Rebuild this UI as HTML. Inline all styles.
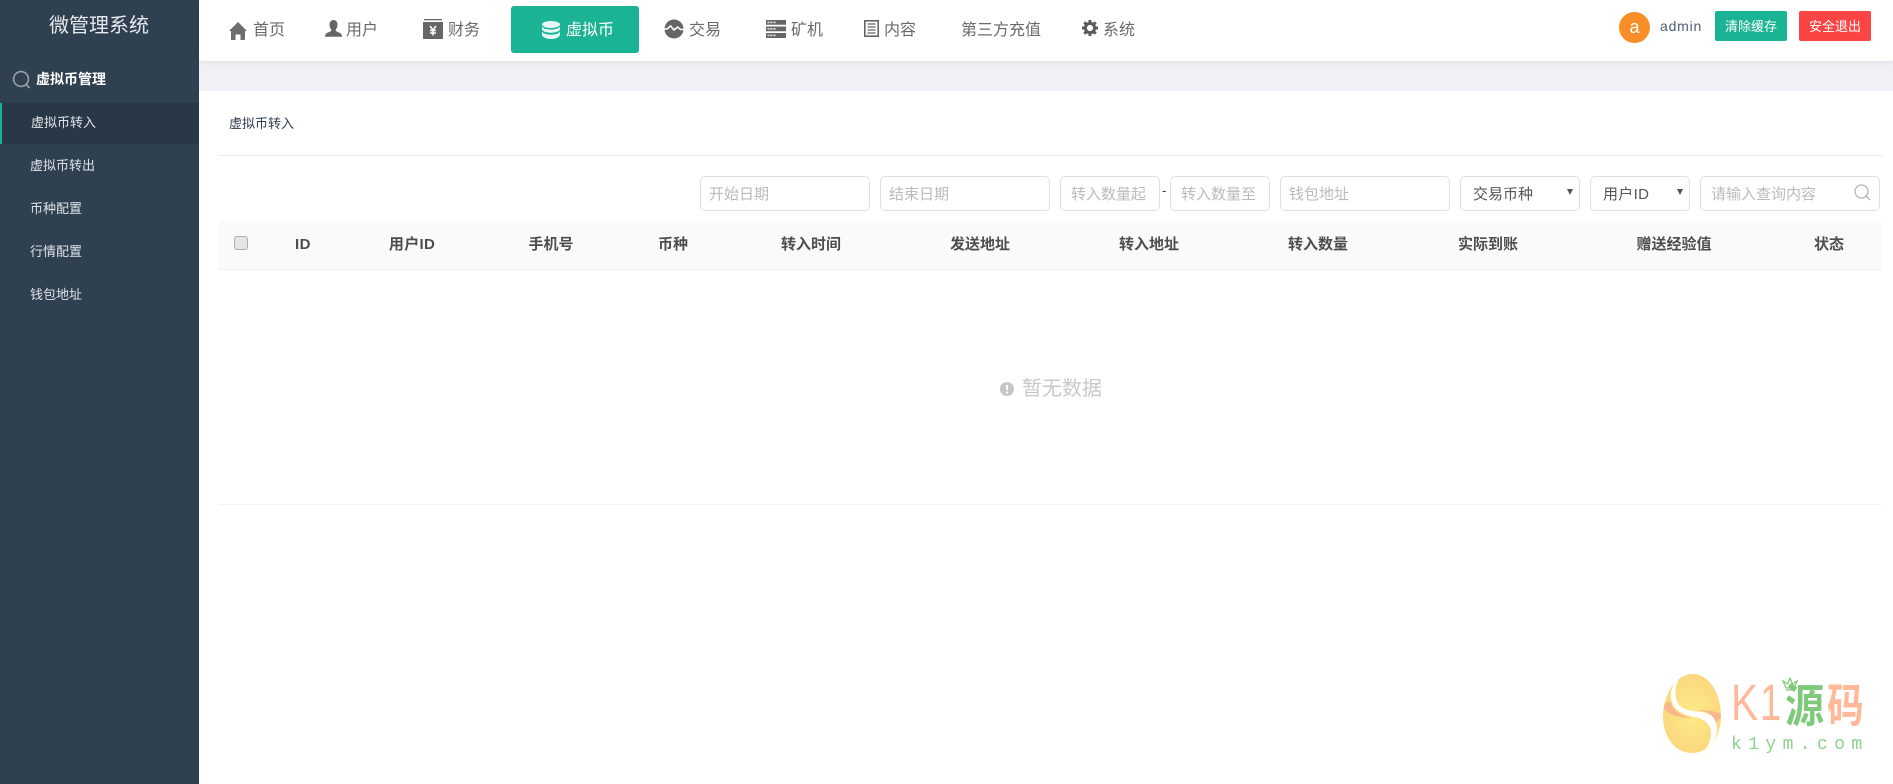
<!DOCTYPE html>
<html lang="zh"><head><meta charset="utf-8"><title>微管理系统</title>
<style>
*{box-sizing:border-box}
html,body{margin:0;padding:0;width:1893px;height:784px;overflow:hidden;background:#fff;font-family:"Liberation Sans","Noto Sans CJK SC",sans-serif}
.t{position:absolute;white-space:nowrap;line-height:20px;height:20px}
#side{position:absolute;left:0;top:0;width:199px;height:784px;background:#2f4050}
.s{color:#dfe3e7;font-size:13px;left:30px}
.n{color:#676a6c;font-size:16px;top:21px}
.b{position:absolute;border:1px solid #e0e0e0;border-radius:5px;height:35px;top:176px;background:#fff}
.p{color:#bbb;font-size:15px;top:185px}
.h{font-weight:700;font-size:15px;color:#4d4d4d;top:235px;transform:translateX(-50%)}
svg{position:absolute;display:block}
</style></head><body>
<div id="side"></div>
<div class="t" style="left:49px;top:16px;font-size:20px;color:#e6e9ec">微管理系统</div>
<svg style="left:12px;top:70px" width="20" height="20" viewBox="0 0 20 20" fill="none" stroke="#9a9fa5" stroke-width="1.6"><circle cx="9" cy="9" r="7.4"/><path d="M14.2 14.6 17.6 18"/></svg>
<div class="t" style="left:36px;top:69px;font-size:14px;font-weight:700;color:#fff">虚拟币管理</div>
<div style="position:absolute;left:0;top:103px;width:199px;height:41px;background:#293846;border-left:2px solid #1ab394"></div>
<div class="t s" style="left:31px;top:113px">虚拟币转入</div>
<div class="t s" style="top:156px">虚拟币转出</div>
<div class="t s" style="top:199px">币种配置</div>
<div class="t s" style="top:242px">行情配置</div>
<div class="t s" style="top:285px">钱包地址</div>

<div style="position:absolute;left:199px;top:61px;width:1694px;height:30px;background:#eff1f6"></div>
<div style="position:absolute;left:199px;top:0;width:1694px;height:61px;background:#fff;border-radius:0 0 0 5px;box-shadow:0 1px 6px rgba(0,0,0,.09)"></div>

<svg style="left:229px;top:22px" width="18" height="18" viewBox="0 0 18 18" fill="#6d6d6d"><path d="M9 0 18 9 16 9 16 17.5Q16 18 15 18H11.500V12.500H6.500V18H3Q2 18 2 17.500V9H0Z"/></svg>
<div class="t n" style="left:253px">首页</div>
<svg style="left:325px;top:20px" width="17" height="17" viewBox="0 0 17 17" fill="#666"><path d="M8.500 0C11 0 12.500 2 12.500 4.800 12.500 7 11.600 8.600 10.800 9.500V11L15 13C16.300 13.700 17 14.800 17 16.800H0C0 14.800 .7 13.700 2 13L6.200 11V9.500C5.400 8.600 4.500 7 4.500 4.800 4.500 2 6 0 8.500 0Z"/></svg>
<div class="t n" style="left:346px">用户</div>
<svg style="left:423px;top:19px" width="20" height="20" viewBox="0 0 20 20"><path fill="#666" d="M1 0H19V1.300H1ZM0 3H20V19.500Q20 20 19.500 20H.5Q0 20 0 19.500Z"/><path stroke="#fff" stroke-width="1.500" fill="none" d="M7 7 10 11 13 7M10 11V16.500M7 11.500H13M7 14H13"/></svg>
<div class="t n" style="left:448px">财务</div>
<div style="position:absolute;left:511px;top:6px;width:128px;height:47px;background:#1ab394;border-radius:3px"></div>
<svg style="left:542px;top:21px" width="18" height="18" viewBox="0 0 18 18" fill="#e6f8f4"><ellipse cx="9" cy="3.500" rx="9" ry="3.500"/><path d="M0 5.500C1.500 7.800 5 8.500 9 8.500S16.500 7.800 18 5.500V8.500C17 10.800 13 11.700 9 11.700S1 10.800 0 8.500ZM0 10.500C1.500 12.800 5 13.700 9 13.700S16.500 12.800 18 10.500V14C17 16.800 13 18 9 18S1 16.800 0 14Z"/></svg>
<div class="t n" style="left:566px;top:21px;color:#fff">虚拟币</div>
<svg style="left:664px;top:19px" width="20" height="20" viewBox="0 0 20 20"><circle cx="10" cy="10" r="9.500" fill="#666"/><path d="M0 10H3L6.500 7 10 11 13.500 8 16.500 10.500H20" fill="none" stroke="#fff" stroke-width="1.600"/></svg>
<div class="t n" style="left:689px">交易</div>
<svg style="left:766px;top:20px" width="20" height="18" viewBox="0 0 20 18" fill="#666"><path d="M0 0H20V4.800H0ZM0 6.500H20V11.300H0ZM0 13H20V18H0Z"/><path fill="#ddd" d="M1.500 1.500H3.500V3.300H1.500ZM4.500 1.500H6.500V3.300H4.500ZM7.500 1.500H9.500V3.300H7.500ZM1.500 8H3.500V9.800H1.500ZM4.500 8H6.500V9.800H4.500ZM7.500 8H9.500V9.800H7.500ZM1.500 14.500H3.500V16.300H1.500ZM4.500 14.500H6.500V16.300H4.500ZM7.500 14.500H9.500V16.300H7.500Z"/></svg>
<div class="t n" style="left:791px">矿机</div>
<svg style="left:864px;top:20px" width="15" height="17" viewBox="0 0 15 17" fill="none" stroke="#666"><rect x=".8" y=".8" width="13.400" height="15.400" stroke-width="1.600"/><path stroke-width="1.300" d="M3.500 4H11.500M3.500 7H11.500M3.500 10H11.500M3.500 13H11.500"/></svg>
<div class="t n" style="left:884px">内容</div>
<div class="t n" style="left:961px">第三方充值</div>
<svg style="left:1082px;top:20px" width="16" height="16" viewBox="0 0 16 16"><circle cx="8" cy="8" r="4.600" fill="none" stroke="#5a5a5a" stroke-width="3"/><path stroke="#5a5a5a" stroke-width="3" d="M8 0V3M8 13V16M0 8H3M13 8H16M2.300 2.300 4.500 4.500M11.500 11.500 13.700 13.700M13.700 2.300 11.500 4.500M4.500 11.500 2.300 13.700"/></svg>
<div class="t n" style="left:1103px">系统</div>

<div style="position:absolute;left:1619px;top:12px;width:31px;height:31px;border-radius:50%;background:#f78e28;color:#fff;font-size:18px;line-height:30px;text-align:center">a</div>
<div class="t" style="left:1660px;top:16px;font-size:14px;letter-spacing:.8px;color:#4f5f78">admin</div>
<div class="t" style="left:1715px;top:11px;width:72px;height:30px;line-height:32px;background:#1ab394;border-radius:2px;color:#fff;font-size:13px;text-align:center">清除缓存</div>
<div class="t" style="left:1799px;top:11px;width:72px;height:30px;line-height:32px;background:#fb4444;border-radius:2px;color:#fff;font-size:13px;text-align:center">安全退出</div>

<div class="t" style="left:229px;top:114px;font-size:13px;color:#2f3d4f">虚拟币转入</div>
<div style="position:absolute;left:219px;top:155px;width:1664px;height:1px;background:#ebedef"></div>

<div class="b" style="left:700px;width:170px"></div><div class="t p" style="left:709px">开始日期</div>
<div class="b" style="left:880px;width:170px"></div><div class="t p" style="left:889px">结束日期</div>
<div class="b" style="left:1060px;width:100px"></div><div class="t p" style="left:1071px">转入数量起</div>
<div class="t" style="left:1162px;top:181px;font-size:13px;color:#2f3d4f">-</div>
<div class="b" style="left:1170px;width:100px"></div><div class="t p" style="left:1181px">转入数量至</div>
<div class="b" style="left:1280px;width:170px"></div><div class="t p" style="left:1289px">钱包地址</div>
<div class="b" style="left:1460px;width:120px"></div><div class="t" style="left:1473px;top:185px;font-size:15px;color:#555">交易币种</div>
<svg style="left:1567px;top:189px" width="6" height="6" viewBox="0 0 6 6" fill="#555"><path d="M0 0H6L3 6Z"/></svg>
<div class="b" style="left:1590px;width:100px"></div><div class="t" style="left:1603px;top:185px;font-size:15px;color:#555;letter-spacing:.3px">用户ID</div>
<svg style="left:1677px;top:189px" width="6" height="6" viewBox="0 0 6 6" fill="#555"><path d="M0 0H6L3 6Z"/></svg>
<div class="b" style="left:1700px;width:180px"></div><div class="t p" style="left:1711px">请输入查询内容</div>
<svg style="left:1854px;top:184px" width="17" height="17" viewBox="0 0 17 17" fill="none" stroke="#b5b5b5" stroke-width="1.300"><circle cx="7.500" cy="7.500" r="6.500"/><path d="M12 12 16 16"/></svg>

<div style="position:absolute;left:219px;top:221px;width:1663px;height:49px;background:#f9fafa;border-bottom:1px solid #eef0f0"></div>
<div style="position:absolute;left:234px;top:236px;width:14px;height:14px;border-radius:3px;background:#e4e5e7;border:1px solid #b0b0b0"></div>
<div class="t h" style="left:303px;letter-spacing:.5px">ID</div>
<div class="t h" style="left:412px;letter-spacing:.3px">用户ID</div>
<div class="t h" style="left:551px">手机号</div>
<div class="t h" style="left:673px">币种</div>
<div class="t h" style="left:811px">转入时间</div>
<div class="t h" style="left:980px">发送地址</div>
<div class="t h" style="left:1149px">转入地址</div>
<div class="t h" style="left:1318px">转入数量</div>
<div class="t h" style="left:1488px">实际到账</div>
<div class="t h" style="left:1674px">赠送经验值</div>
<div class="t h" style="left:1829px">状态</div>

<svg style="left:1000px;top:382px" width="14" height="14" viewBox="0 0 14 14"><circle cx="7" cy="7" r="7" fill="#c6c6c6"/><path d="M7 3V8M7 9.500V11.500" stroke="#fff" stroke-width="2"/></svg>
<div class="t" style="left:1022px;top:379px;font-size:20px;color:#c8c8c8">暂无数据</div>
<div style="position:absolute;left:219px;top:504px;width:1663px;height:1px;background:#f3f4f4"></div>

<svg style="left:1663px;top:674px" width="59" height="80" viewBox="0 0 59 80"><defs><radialGradient id="g" cx=".5" cy=".5" r=".65"><stop offset="0" stop-color="#fdeb86"/><stop offset="1" stop-color="#fbd27c"/></radialGradient></defs><path d="M30 0C46 0 58 20 58 42 58 63 46 79 29 79 12 79 0 63 0 42 0 20 13 0 30 0Z" fill="url(#g)"/><path d="M.5 33C3 40 14 44 30 44 18 42 10 37 7 27 3 29 1 31 .5 33ZM32 37C42 36 51 40 53 49 56 46 58 43 58 40 52 37 42 35 32 37Z" fill="#f5a98f" opacity=".75"/><path d="M17 3C9 9 6 20 9 28 11 36 20 41 32 43 42 45 47 50 48 58 48 65 46 71 42 75 50 71 54 62 54 55 54 45 48 39 38 38 28 37 17 36 14 27 11 18 13 9 17 3Z" fill="#fff"/></svg>
<div class="t" style="left:1731px;top:678px;height:50px;line-height:50px;font-size:51px;color:#ffb999;transform:scaleX(.8);transform-origin:left">K</div>
<div class="t" style="left:1760px;top:678px;height:50px;line-height:50px;font-size:51px;color:#ffb999;transform:scaleX(.75);transform-origin:left">1</div>
<svg style="left:1782px;top:677px" width="16" height="14" viewBox="0 0 16 14" fill="none" stroke="#86c97f" stroke-width="1.300"><path d="M1 4 4 11H12L15 4 10.500 7 8 1 5.500 7Z"/><path d="M4 13H12"/></svg>
<div class="t" style="left:1785px;top:682px;height:48px;line-height:48px;font-size:46px;font-weight:700;color:#7fc97b;transform:scaleX(.85);transform-origin:left">源</div>
<div class="t" style="left:1827px;top:682px;height:48px;line-height:48px;font-size:46px;font-weight:700;color:#ffb999;transform:scaleX(.8);transform-origin:left">码</div>
<div class="t" style="left:1731px;top:735px;font-family:'Liberation Mono',monospace;font-size:18px;letter-spacing:6.400px;color:#8fd08c">k1ym.com</div>
</body></html>
